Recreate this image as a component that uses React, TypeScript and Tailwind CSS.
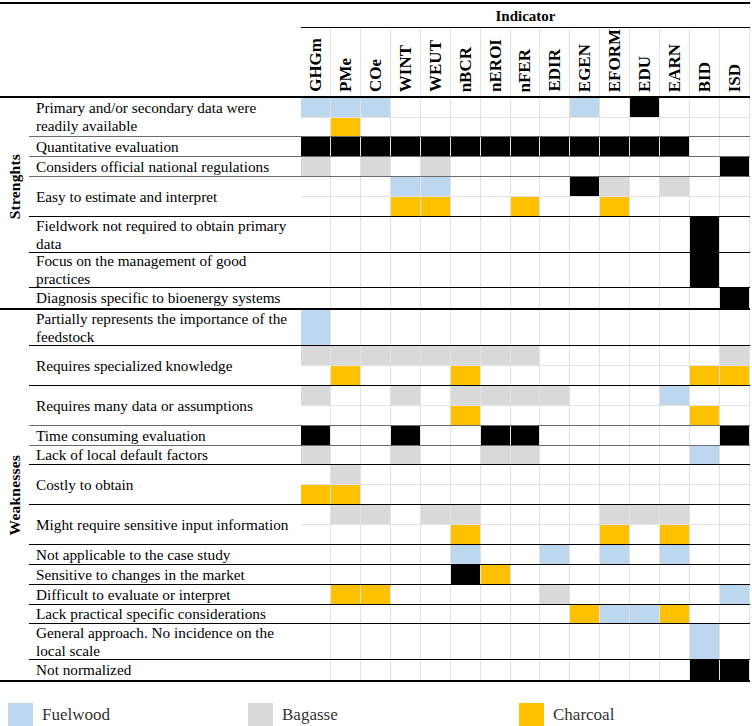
import React from "react";

// Indicator columns, in header order
const COLS = ["GHGm", "PMe", "COe", "WINT", "WEUT", "nBCR", "nEROI", "nFER", "EDIR", "EGEN", "EFORM", "EDU", "EARN", "BID", "ISD"];

// F = fuelwood, B = bagasse, C = charcoal, K = all (black), . = none
const FILL: Record<string, string> = {
  F: "bg-[#bdd7ee]",
  B: "bg-[#d9d9d9]",
  C: "bg-[#ffc000]",
  K: "bg-black",
  ".": "bg-white",
};

type Row = { label: string; h: string; cells: string[]; line?: string };

const STRENGTHS: Row[] = [
  { label: "Primary and/or secondary data were\nreadily available", h: "h-[39px]", cells: ["FFF......F.K...", ".C............."], line: "border-b border-[#6b6b6b]" },
  { label: "Quantitative evaluation", h: "h-[20px]", cells: ["KKKKKKKKKKKKK.."], line: "border-b border-[#6b6b6b]" },
  { label: "Considers official national regulations", h: "h-[20px]", cells: ["B.B.B.........K"], line: "border-b border-[#6b6b6b]" },
  { label: "Easy to estimate and interpret", h: "h-[40px]", cells: ["...FF....KB.B..", "...CC..C..C...."], line: "border-b border-black" },
  { label: "Fieldwork not required to obtain primary\ndata", h: "h-[36px]", cells: [".............K."], line: "border-b border-black" },
  { label: "Focus on the management of good\npractices", h: "h-[35px]", cells: [".............K."], line: "border-b border-black" },
  { label: "Diagnosis specific to bioenergy systems", h: "h-[20px]", cells: ["..............K"] },
];

const WEAKNESSES: Row[] = [
  { label: "Partially represents the importance of the\nfeedstock", h: "h-[36px]", cells: ["F.............."], line: "border-b border-black" },
  { label: "Requires specialized knowledge", h: "h-[40px]", cells: ["BBBBBBBB......B", ".C...C.......CC"], line: "border-b border-black" },
  { label: "Requires many data or assumptions", h: "h-[40px]", cells: ["B..B.BBBB...F..", ".....C.......C."], line: "border-b border-[#6b6b6b]" },
  { label: "Time consuming evaluation", h: "h-[20px]", cells: ["K..K..KK......K"], line: "border-b border-[#6b6b6b]" },
  { label: "Lack of local default factors", h: "h-[19px]", cells: ["B..B..BB.....F."], line: "border-b border-black" },
  { label: "Costly to obtain", h: "h-[40px]", cells: [".B.............", "CC............."], line: "border-b border-black" },
  { label: "Might require sensitive input information", h: "h-[40px]", cells: [".BB.BB....BBB..", ".....C....C.C.."], line: "border-b border-black" },
  { label: "Not applicable to the case study", h: "h-[20px]", cells: [".....F..F.F.F.."], line: "border-b border-black" },
  { label: "Sensitive to changes in the market", h: "h-[20px]", cells: [".....KC........"], line: "border-b border-black" },
  { label: "Difficult to evaluate or interpret", h: "h-[20px]", cells: [".CC.....B.....F"], line: "border-b border-black" },
  { label: "Lack practical specific considerations", h: "h-[19px]", cells: [".........CFFC.."], line: "border-b border-black" },
  { label: "General approach. No incidence on the\nlocal scale", h: "h-[36px]", cells: [".............F."], line: "border-b border-black" },
  { label: "Not normalized", h: "h-[20px]", cells: [".............KK"] },
];

function TableRow({ row }: { row: Row }) {
  return (
    <div className={`flex ${row.h} ${row.line ?? ""}`}>
      <div className="w-[272px] shrink-0 pl-[7px] flex items-center text-[15.25px] leading-[18px] whitespace-pre-line text-black">
        {row.label}
      </div>
      <div className="flex-1 flex flex-col">
        {row.cells.map((line, i) => (
          <div key={i}
            className={`flex-1 grid grid-cols-[repeat(15,minmax(0,1fr))] ${i < row.cells.length - 1 ? "border-b border-[#e2e2e2]" : ""}`}>
            {line.split("").map((c, j) => (
              <div key={j} className={`border-r border-[#e2e2e2] ${FILL[c]}`} />
            ))}
          </div>
        ))}
      </div>
    </div>
  );
}

function Section({ title, rows, titleClass }: { title: string; rows: Row[]; titleClass: string }) {
  return (
    <div className="flex border-b-2 border-black">
      <div className={`w-[29px] shrink-0 flex items-center justify-center ${titleClass}`}>
        <span className="[writing-mode:vertical-rl] rotate-180 font-bold text-[15.5px] leading-none tracking-[0.2px]">{title}</span>
      </div>
      <div className="flex-1">
        {rows.map((r, i) => <TableRow key={i} row={r} />)}
      </div>
    </div>
  );
}

function Swatch({ color, label, width }: { color: string; label: string; width: string }) {
  return (
    <div className={`flex items-start gap-[9px] ${width}`}>
      <div className={`w-[25px] h-[26px] ${color}`} />
      <span className="text-[17px] leading-[17px] pt-[3px] text-[#333]">{label}</span>
    </div>
  );
}

export default function App() {
  return (
    <div className="w-[752px] h-[726px] overflow-hidden bg-white font-['Liberation_Serif',serif] text-black pt-[2px]">
      <div className="w-[750px]">
        {/* Header */}
        <div className="flex border-t-2 border-b-2 border-black">
          <div className="w-[301px] shrink-0" />
          <div className="flex-1 flex flex-col">
            <div className="h-[24px] border-b border-black flex items-center justify-center pt-[1px]">
              <span className="font-bold text-[15px] leading-none">Indicator</span>
            </div>
            <div className="h-[68px] grid grid-cols-[repeat(15,minmax(0,1fr))]">
              {COLS.map(c => (
                <div key={c} className="border-r border-[#e2e2e2] flex items-end justify-center pb-[4px]">
                  <span className="[writing-mode:vertical-rl] rotate-180 font-bold text-[17px] leading-none">{c}</span>
                </div>
              ))}
            </div>
          </div>
        </div>

        <Section title="Strenghts" rows={STRENGTHS} titleClass="pb-[32px]" />
        <Section title="Weaknesses" rows={WEAKNESSES} titleClass="" />
      </div>

      {/* Legend */}
      <div className="flex pl-[8px] mt-[21px]">
        <Swatch color="bg-[#bdd7ee]" label="Fuelwood" width="w-[240px]" />
        <Swatch color="bg-[#d9d9d9]" label="Bagasse" width="w-[271px]" />
        <Swatch color="bg-[#ffc000]" label="Charcoal" width="w-[200px]" />
      </div>
    </div>
  );
}
